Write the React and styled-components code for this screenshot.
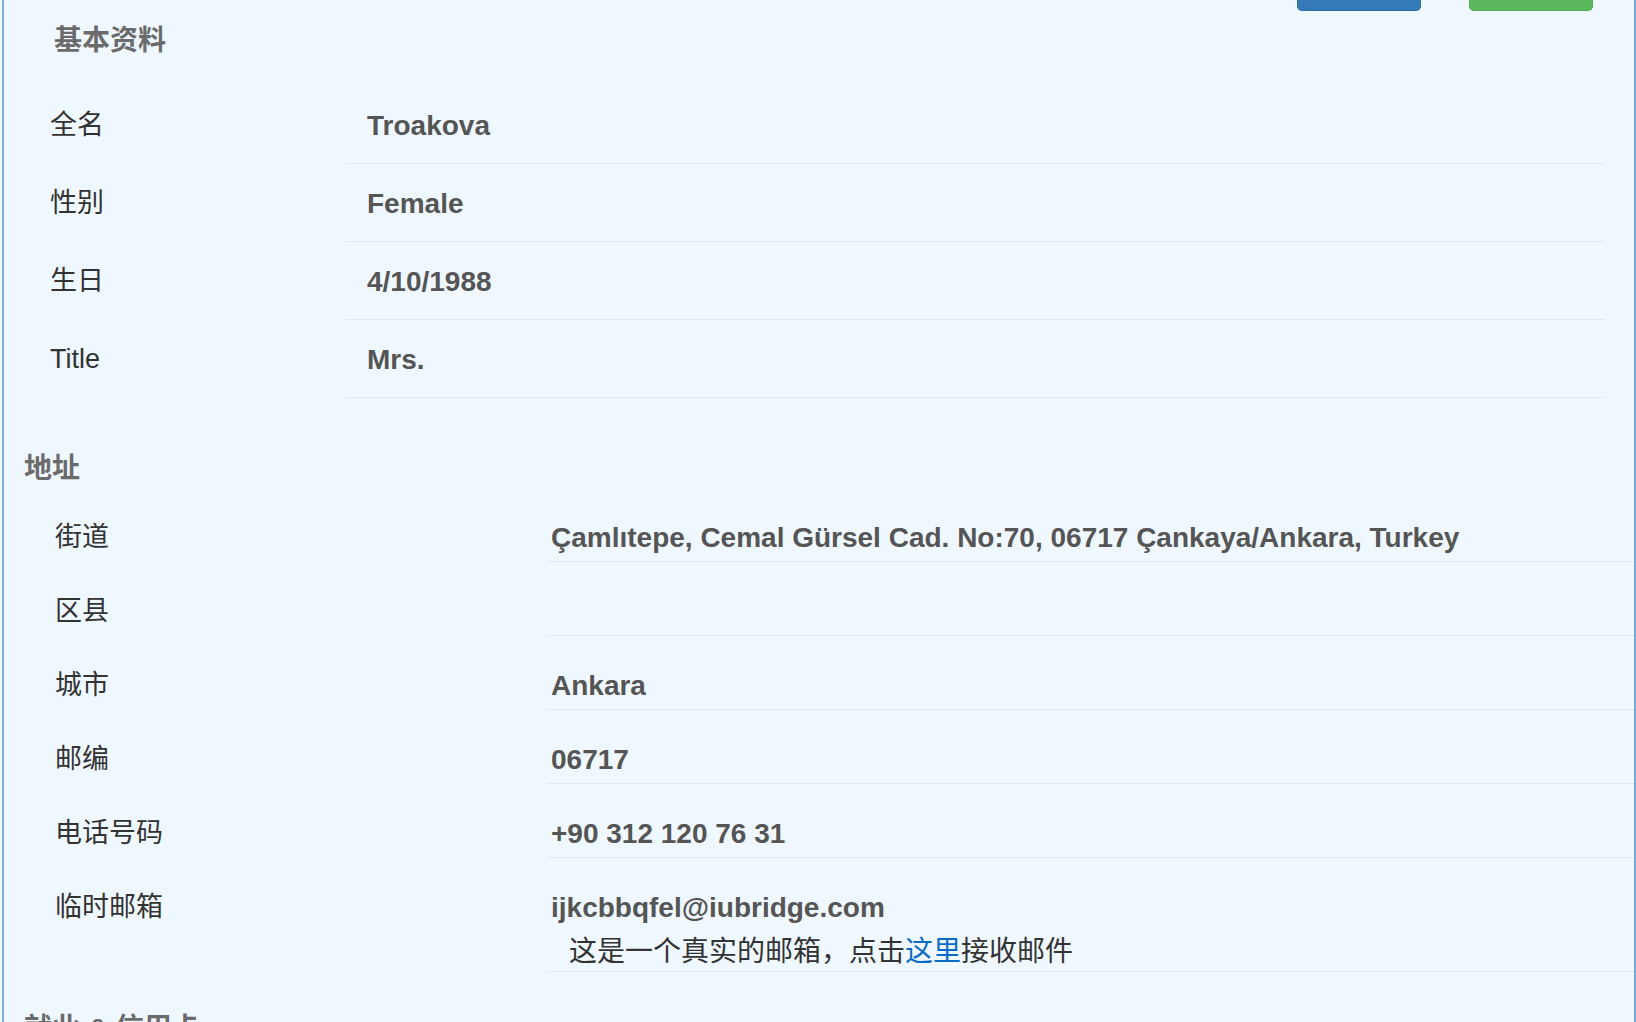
import React from 'react';
import styled, { createGlobalStyle } from 'styled-components';

const GlobalStyle = createGlobalStyle`
  html, body {
    margin: 0;
    padding: 0;
    background: #f0f8ff;
  }
  body {
    font-family: "Liberation Sans", "Noto Sans CJK SC", sans-serif;
    color: #333333;
  }
`;

const basicInfo = [
  { label: '全名', value: 'Troakova' },
  { label: '性别', value: 'Female' },
  { label: '生日', value: '4/10/1988' },
  { label: 'Title', value: 'Mrs.' },
];

const address = [
  { label: '街道', value: 'Çamlıtepe, Cemal Gürsel Cad. No:70, 06717 Çankaya/Ankara, Turkey' },
  { label: '区县', value: '' },
  { label: '城市', value: 'Ankara' },
  { label: '邮编', value: '06717' },
  { label: '电话号码', value: '+90 312 120 76 31' },
];

const App = () => {
  return (
    <>
      <GlobalStyle />
      <Panel>
        <Toolbar>
          <Btn color="#337ab7" border="#2e6da4" />
          <Btn color="#5cb85c" border="#4cae4c" />
        </Toolbar>

        <SectionTitle indent="50px" top="11px" bottom="26px">基本资料</SectionTitle>
        {basicInfo.map((item) => (
          <BasicRow key={item.label}>
            <BasicLabel>{item.label}</BasicLabel>
            <BasicValue>{item.value}</BasicValue>
          </BasicRow>
        ))}

        <SectionTitle indent="20px" top="52px">地址</SectionTitle>
        {address.map((item) => (
          <AddrRow key={item.label}>
            <AddrLabel>{item.label}</AddrLabel>
            <AddrValue>{item.value}</AddrValue>
          </AddrRow>
        ))}
        <AddrRow>
          <AddrLabel>临时邮箱</AddrLabel>
          <AddrValue bottom="1px">
            ijkcbbqfel@iubridge.com
            <Note>
              这是一个真实的邮箱，点击<Link href="#">这里</Link>接收邮件
            </Note>
          </AddrValue>
        </AddrRow>

        <SectionTitle indent="20px" top="38px">就业 &amp; 信用卡</SectionTitle>
      </Panel>
    </>
  );
};

const Panel = styled.div`
  margin-left: 2px;
  min-height: 1022px;
  box-sizing: border-box;
  border-left: 2px solid #86aad6;
  border-right: 2px solid #72a9dc;
  background: #f0f8ff;
  overflow: hidden;
`;

const Toolbar = styled.div`
  display: flex;
  justify-content: flex-end;
  gap: 48px;
  height: 11px;
  padding-right: 41px;
`;

const Btn = styled.div`
  width: 124px;
  height: 11px;
  box-sizing: border-box;
  background: ${(p) => p.color};
  border: 1px solid ${(p) => p.border};
  border-top: none;
  border-radius: 0 0 5px 5px;
`;

const SectionTitle = styled.div`
  margin: ${(p) => p.top || '0'} 0 ${(p) => p.bottom || '0'} ${(p) => p.indent};
  font-size: 28px;
  line-height: 38px;
  font-weight: bold;
  color: #6b6b6b;
`;

const BasicRow = styled.div`
  display: flex;
  align-items: center;
  height: 78px;
`;

const BasicLabel = styled.div`
  width: 342px;
  padding-left: 46px;
  box-sizing: border-box;
  font-size: 27px;
  line-height: 36px;
  color: #333333;
`;

const BasicValue = styled.div`
  flex: 1;
  align-self: stretch;
  display: flex;
  align-items: center;
  margin-right: 30px;
  padding: 3px 0 0 21px;
  border-bottom: 1px solid #e3e7eb;
  font-size: 28px;
  font-weight: bold;
  color: #555555;
`;

const AddrRow = styled.div`
  display: flex;
`;

const AddrLabel = styled.div`
  width: 543px;
  padding: 31px 0 0 51px;
  box-sizing: border-box;
  font-size: 27px;
  line-height: 36px;
  color: #333333;
`;

const AddrValue = styled.div`
  flex: 1;
  min-height: 36px;
  padding: 32px 0 ${(p) => p.bottom || '5px'} 4px;
  border-bottom: 1px solid #e3e7eb;
  font-size: 28px;
  line-height: 36px;
  font-weight: bold;
  color: #555555;
`;

const Note = styled.div`
  margin-top: 8px;
  padding-left: 18px;
  font-size: 28px;
  line-height: 36px;
  font-weight: normal;
  color: #333333;
`;

const Link = styled.a`
  color: #0b6cc6;
  text-decoration: none;
`;

export default App;
